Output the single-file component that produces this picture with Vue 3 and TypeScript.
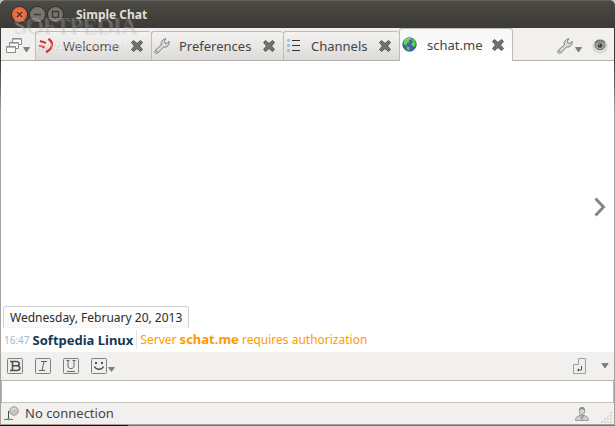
<script setup lang="ts">
import { ref } from 'vue'

interface Tab {
  id: string
  title: string
}

const tabs: Tab[] = [
  { id: 'welcome', title: 'Welcome' },
  { id: 'preferences', title: 'Preferences' },
  { id: 'channels', title: 'Channels' },
  { id: 'server', title: 'schat.me' },
]
const active = ref('server')
const message = ref('')
</script>

<template>
  <div class="window">
    <header class="titlebar">
      <button class="wm close" aria-label="Close">
        <svg viewBox="0 0 15 15"><path d="M5 5l5 5M10 5l-5 5" /></svg>
      </button>
      <button class="wm" aria-label="Minimize">
        <svg viewBox="0 0 15 15"><path d="M4 7.5h7" /></svg>
      </button>
      <button class="wm" aria-label="Maximize">
        <svg viewBox="0 0 15 15"><path d="M4.500 4.500h6v6h-6z" /></svg>
      </button>
      <h1>Simple Chat</h1>
      <div class="watermark" aria-hidden="true">
        <span class="brand">SOFTPEDIA</span>
        <span class="site">www.softpedia.com</span>
      </div>
    </header>

    <nav class="tabbar">
      <button class="tool windows" aria-label="Windows">
        <svg width="26" height="18" viewBox="0 0 26 18">
          <g fill="#fafafa" stroke="#8b8b8b">
            <path d="M6.500 1.500h9v6h-9z" /><path d="M7 2.500h8" stroke="#bbb" />
            <path d="M3.500 5.500h9v6h-9z" /><path d="M4 6.500h8" stroke="#bbb" />
            <path d="M.500 9.500h9v6h-9z" /><path d="M1 10.500h8" stroke="#bbb" />
          </g>
          <path d="M17.500 10.500h6l-3 4.500z" fill="#808080" stroke="#606060" stroke-width=".6" />
        </svg>
      </button>

      <div class="tabs">
        <div v-for="tab in tabs" :key="tab.id" class="tab" :class="[tab.id, { active: active === tab.id }]">
          <button class="pick" @click="active = tab.id">
            <svg v-if="tab.id === 'welcome'" width="16" height="16" viewBox="0 0 16 16" fill="none" stroke="#e22a22">
              <path d="M2 3l6 2M1 7.500l6 2" stroke-width="2" />
              <path d="M10.500.800c5.500 4 4.500 9.500-2.500 13.500" stroke-width="2.200" />
            </svg>
            <svg v-else-if="tab.id === 'preferences'" width="16" height="16" viewBox="0 0 16 16">
              <path d="M1 12.500L7.300 7C6.600 4 8.500 1 12 .700L10.300 3.200l.7 1.900 2 .4 2-2.200c.8 3.500-2 6.500-5.500 5.700L3.800 15c-1.800 1.200-4-.8-2.800-2.500z" fill="#d9d9d7" stroke="#7c7c7a" />
              <circle cx="2.800" cy="13.200" r=".8" fill="#777" />
            </svg>
            <svg v-else-if="tab.id === 'channels'" width="16" height="16" viewBox="0 0 16 16">
              <g fill="#9ac8ec" stroke="#76acd9" stroke-width=".6">
                <rect x="1.500" y="1.500" width="2" height="2" rx=".5" />
                <rect x="1.500" y="6.500" width="2" height="2" rx=".5" />
                <rect x="1.500" y="11.500" width="2" height="2" rx=".5" />
              </g>
              <path d="M6 2.500h8M6 7.500h8M6 12.500h8" stroke="#333" />
            </svg>
            <svg v-else width="16" height="16" viewBox="0 0 16 16">
              <circle cx="7.500" cy="7.500" r="6.700" fill="#5058c4" stroke="#353c98" stroke-width=".8" />
              <path d="M1.200 6.500c.3-3 2.500-5 5.300-5.500L8.500 2.500 7 4l.5 1.500L5 6.500 4.500 9 2.500 8zM9.500 1.500l3 1.500 1.500 4-1.200 3-1.800-.5L9 7.500 10.500 5zM5 9l3 1.500-.5 2L6 14l-1.500-2.500z" fill="#5bd84b" stroke="#278a35" stroke-width=".5" />
              <path d="M3 3.500c2-2.200 5-2.500 7-1.200" stroke="#d5f8da" fill="none" opacity=".6" />
            </svg>
            <span>{{ tab.title }}</span>
          </button>
          <button class="shut" :aria-label="'Close ' + tab.title">
            <svg width="14" height="14" viewBox="0 0 14 14">
              <path d="M3.500 1.500L7 4.500l3.500-3 2 2L9.500 7l3 3.500-2 2L7 9.500l-3.500 3-2-2L4.500 7l-3-3.500z" fill="#70726e" stroke="#555754" stroke-linejoin="round" />
            </svg>
          </button>
        </div>
      </div>

      <div class="right-tools">
        <button class="tool" aria-label="Settings">
          <svg width="25" height="18" viewBox="0 0 25 18">
            <path d="M1 13.500L7.300 8C6.600 5 8.500 2 12 1.700L10.300 4.200l.7 1.900 2 .4 2-2.200c.8 3.500-2 6.500-5.500 5.700L3.800 16c-1.800 1.200-4-.8-2.800-2.500z" fill="#d9d9d7" stroke="#7c7c7a" />
            <circle cx="2.800" cy="14.200" r=".8" fill="#777" />
            <path d="M18.500 10.500h6l-3 4.500z" fill="#808080" stroke="#606060" stroke-width=".6" />
          </svg>
        </button>
        <button class="tool" aria-label="Sound">
          <svg width="16" height="16" viewBox="0 0 16 16">
            <ellipse cx="8" cy="8.500" rx="7" ry="6.500" fill="#e2e2e0" stroke="#c9c9c6" />
            <path d="M3 5C4.500 1.500 11 1 13 4.500" fill="none" stroke="#777" stroke-width="1.400" />
            <ellipse cx="8" cy="7.500" rx="5" ry="4.300" fill="#a2a29f" stroke="#6b6b69" />
            <circle cx="8" cy="7.500" r="2.200" fill="#3c3c3c" />
            <circle cx="7.500" cy="6.800" r=".8" fill="#aaa" />
          </svg>
        </button>
      </div>
    </nav>

    <main class="chat">
      <button class="next" aria-label="Show users">
        <svg width="12" height="20" viewBox="0 0 12 20"><path d="M1.500 1.500L9.500 10l-8 8.500" fill="none" stroke="#858585" stroke-width="3" /></svg>
      </button>
      <div class="log">
        <div class="date">Wednesday, February 20, 2013</div>
        <p class="line">
          <time>16:47</time>
          <strong class="who">Softpedia Linux</strong>
          <span class="text">Server <strong>schat.me</strong> requires authorization</span>
        </p>
      </div>
    </main>

    <div class="format">
      <button class="tool" aria-label="Bold">
        <svg width="16" height="16" viewBox="0 0 16 16">
          <rect class="key" x=".5" y=".5" width="15" height="15" rx="1" />
          <path d="M3 3.500h6.500c3.500 0 3.500 4 .5 4.300 4 .3 3.500 4.700 0 4.700H3M5.500 3.500v9M5.500 7.800H10" fill="none" stroke="#505050" stroke-width="1.600" />
        </svg>
      </button>
      <button class="tool" aria-label="Italic">
        <svg width="16" height="16" viewBox="0 0 16 16">
          <rect class="key" x=".5" y=".5" width="15" height="15" rx="1" />
          <path d="M6 3.500h6M4 12.500h6M9 3.500l-2 9" fill="none" stroke="#606060" />
        </svg>
      </button>
      <button class="tool" aria-label="Underline">
        <svg width="16" height="16" viewBox="0 0 16 16">
          <rect class="key" x=".5" y=".5" width="15" height="15" rx="1" />
          <path d="M3.500 2.500h3M9.500 2.500h3M5 2.500V8c0 3.500 6 3.500 6 0V2.500M4 13.500h8" fill="none" stroke="#686868" />
        </svg>
      </button>
      <button class="tool" aria-label="Smileys">
        <svg width="25" height="16" viewBox="0 0 25 16">
          <rect class="key" x=".5" y=".5" width="15" height="15" rx="1" />
          <path d="M4 4h2v2H4zM10 4h2v2h-2z" fill="#505050" />
          <path d="M3.500 8.500c1.500 3.500 7.500 3.500 9 0" fill="none" stroke="#505050" stroke-width="1.500" />
          <path d="M17.500 9.500h6l-3 4z" fill="#808080" stroke="#606060" stroke-width=".6" />
        </svg>
      </button>
      <span class="spacer"></span>
      <button class="tool send" aria-label="Send">
        <svg width="14" height="16" viewBox="0 0 14 16">
          <path class="key soft" d="M5.500.500h7v15h-12v-9h5z" />
          <path d="M8.500 8v4H5" fill="none" stroke="#555" /><path d="M4 12l2-1.800v3.600z" fill="#555" />
        </svg>
      </button>
      <button class="tool" aria-label="More">
        <svg width="8" height="6" viewBox="0 0 8 6"><path d="M.800.500h6.400L4 5z" fill="#808080" stroke="#606060" stroke-width=".6" /></svg>
      </button>
    </div>

    <input v-model="message" class="entry" type="text" aria-label="Message" />

    <footer class="status">
      <svg width="16" height="16" viewBox="0 0 16 16">
        <circle cx="10" cy="5" r="4.300" fill="#c4c4c4" stroke="#a0a0a0" />
        <path d="M7.500 4.500c1-2.500 4-2.500 5-1" fill="none" stroke="#eee" />
        <path d="M4.500 5v8" stroke="#444" fill="none" /><path d="M0 13.500h9" stroke="#777" />
        <circle cx="4.500" cy="13" r="1.300" fill="#36bd36" />
      </svg>
      <span>No connection</span>
      <span class="spacer"></span>
      <svg class="user" width="16" height="16" viewBox="0 0 16 16">
        <path d="M1.500 14.500c0-3.500 1.500-4 4.500-5h4c3 1 4.500 1.500 4.500 5z" fill="#cececc" stroke="#a0a09e" />
        <ellipse cx="8" cy="5" rx="2.700" ry="3.700" fill="#d8d8d6" stroke="#999997" />
        <path d="M5.200 4c0-4 5.600-4 5.600 0-2-1-3.600-1-5.600 0z" fill="#8b8b8b" />
        <path d="M6 9.500l2 2.500 2-2.500M8 11v3" fill="none" stroke="#828282" />
      </svg>
      <svg class="grip" width="12" height="12" viewBox="0 0 12 12" fill="#dad8d5">
        <path d="M9 0h2v2H9zM6 3h2v2H6zM9 3h2v2H9zM3 6h2v2H3zM6 6h2v2H6zM9 6h2v2H9zM0 9h2v2H0zM3 9h2v2H3zM6 9h2v2H6zM9 9h2v2H9z" />
      </svg>
    </footer>
    <div class="edge"></div>
  </div>
</template>

<style>
body {
  margin: 0;
  background: #b9c3c9;
}
</style>

<style scoped>
.window {
  box-sizing: border-box;
  display: flex;
  flex-direction: column;
  height: 100vh;
  overflow: hidden;
  padding: 0 1px;
  border-radius: 6px 6px 0 0;
  background: linear-gradient(#3b3a36 62px, #a5a29d 112px);
  color: #454545;
  font: 13px/18px "Noto Sans", sans-serif;
}
button {
  display: flex;
  align-items: center;
  padding: 0;
  border: 0;
  background: none;
  color: inherit;
  font: inherit;
}
svg {
  display: block;
  flex: none;
}
.titlebar {
  position: relative;
  display: flex;
  flex: none;
  align-items: center;
  gap: 3px;
  height: 28px;
  margin: 0 -1px;
  padding: 0 12px;
  box-sizing: border-box;
  border-top: 1px solid #64625b;
  border-radius: 6px 6px 0 0;
  background: linear-gradient(#4b4a44, #3b3a36);
}
.wm {
  width: 15px;
  height: 15px;
  border-radius: 50%;
  background: #77756e;
  box-shadow: 0 0 0 1px #34332f;
}
.wm svg {
  width: 15px;
  height: 15px;
  fill: none;
  stroke: #3b3a36;
  stroke-width: 1.4;
}
.wm.close {
  background: radial-gradient(#f47b55, #e6552b);
}
h1 {
  margin: 0 0 0 10px;
  color: #e2dfd7;
  font: bold 12px/18px "Noto Sans", sans-serif;
}
.watermark {
  position: absolute;
  z-index: 2;
  top: 14px;
  left: 14px;
  display: flex;
  flex-direction: column;
  pointer-events: none;
  font-family: "Liberation Serif", serif;
}
.brand {
  color: rgba(130, 130, 126, 0.15);
  font-size: 23px;
  line-height: 24px;
  text-shadow: -1px -1px 0 rgba(210, 210, 205, 0.25), 1px 1px 0 rgba(190, 190, 185, 0.2);
}
.site {
  padding-left: 22px;
  color: rgba(255, 255, 255, 0.5);
  font: 10px/14px "Liberation Sans", sans-serif;
  text-shadow: 1px 1px 0 rgba(140, 140, 140, 0.25);
}
.tabbar {
  display: flex;
  flex: none;
  align-items: flex-end;
  height: 33px;
  box-sizing: border-box;
  border-bottom: 1px solid #b4b1ad;
  background: #f1f0ee;
}
.windows {
  width: 34px;
  height: 28px;
  padding-left: 5px;
  box-sizing: border-box;
}
.tabs {
  display: flex;
  align-items: flex-end;
}
.tab {
  display: flex;
  align-items: center;
  justify-content: space-between;
  width: 116px;
  height: 29px;
  padding: 0 7px 0 2px;
  box-sizing: border-box;
  border: 1px solid #bfbcb8;
  border-right-width: 0;
  border-bottom: 0;
  border-radius: 3px 3px 0 0;
  background: linear-gradient(#f4f3f2, #dddbd9);
}
.tab.preferences {
  width: 132px;
}
.tab.active {
  width: 114px;
  height: 33px;
  margin-bottom: -1px;
  border-right-width: 1px;
  background: linear-gradient(#f7f7f7, #fff);
}
.pick {
  gap: 9px;
}
.right-tools {
  display: flex;
  align-items: center;
  gap: 10px;
  height: 28px;
  margin-left: auto;
  padding-right: 6px;
}
.chat {
  position: relative;
  display: flex;
  flex: 1;
  flex-direction: column;
  min-height: 0;
  background: #fff;
}
.next {
  position: absolute;
  top: 50%;
  right: 8px;
  transform: translateY(-50%);
}
.log {
  margin-top: auto;
  padding: 0 2px 3px;
  font-size: 12px;
}
.date {
  width: fit-content;
  padding: 2px 6px 0;
  border: 1px solid #d0d0d0;
  border-bottom-color: #f4f4f4;
  border-radius: 3px 3px 0 0;
  background: linear-gradient(#fff, #f9f9f9);
  color: #2b2b2b;
}
.line {
  display: flex;
  align-items: center;
  gap: 3px;
  margin: 2px 0 0;
  padding-left: 1px;
}
time {
  color: #a5b8c6;
  font-size: 10px;
}
.who {
  color: #153855;
  font-size: 13px;
}
.text {
  padding-left: 3px;
  border-left: 1px solid #e4e4e4;
  color: #ff9900;
}
.text strong {
  font-size: 13px;
}
.format {
  display: flex;
  flex: none;
  align-items: center;
  gap: 12px;
  height: 28px;
  padding: 0 5px 0 6px;
  background: #f1f0ee;
}
.key {
  fill: #eeeeec;
  stroke: #808080;
}
.key.soft {
  stroke: #a0a0a0;
}
.spacer {
  flex: 1;
}
.send {
  margin-right: 2px;
}
.entry {
  flex: none;
  width: 100%;
  height: 23px;
  padding: 2px 4px;
  box-sizing: border-box;
  border: 1px solid #b9b6b0;
  border-bottom-color: #c6c3be;
  outline: 0;
  background: #fff;
  color: #222;
  font: inherit;
}
.status {
  display: flex;
  flex: none;
  align-items: center;
  gap: 5px;
  height: 21px;
  padding: 0 1px 0 3px;
  background: #f1f0ee;
}
.status span {
  line-height: 20px;
  padding-bottom: 1px;
}
.grip {
  align-self: flex-end;
  margin-left: 6px;
}
.edge {
  flex: none;
  height: 2px;
  margin: 0 -1px;
  box-sizing: border-box;
  border-top: 1px solid #a5a29d;
  background: linear-gradient(90deg, #151015 127px, #777 129px);
}
</style>
